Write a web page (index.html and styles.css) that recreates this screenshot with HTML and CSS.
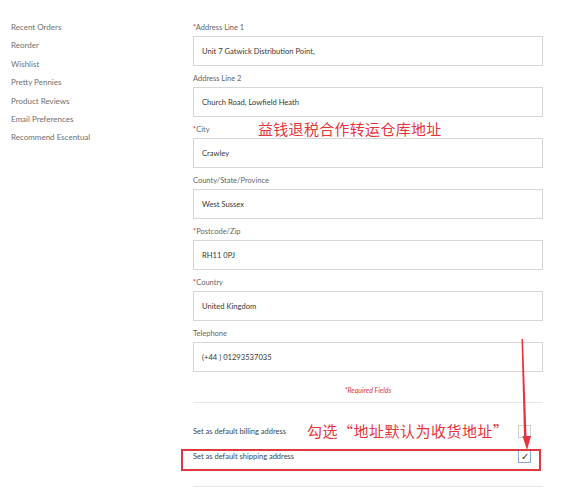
FILE: index.html
```html
<!DOCTYPE html>
<html>
<head>
    <title>Address Book - Edit Address</title>
    <link rel="stylesheet" href="styles.css">
</head>
<body>

<div class="page">
    <nav class="side-nav">
        <ul>
            <li><a href="#">Recent Orders</a></li>
            <li><a href="#">Reorder</a></li>
            <li><a href="#">Wishlist</a></li>
            <li><a href="#">Pretty Pennies</a></li>
            <li><a href="#">Product Reviews</a></li>
            <li><a href="#">Email Preferences</a></li>
            <li><a href="#">Recommend Escentual</a></li>
        </ul>
    </nav>

    <main class="address-form">
        <div class="field">
            <label><span class="req">*</span>Address Line 1</label>
            <div class="input">Unit 7 Gatwick Distribution Point,</div>
        </div>
        <div class="field">
            <label>Address Line 2</label>
            <div class="input">Church Road, Lowfield Heath</div>
        </div>
        <div class="field">
            <label><span class="req">*</span>City</label>
            <div class="input">Crawley</div>
        </div>
        <div class="field">
            <label>County/State/Province</label>
            <div class="input">West Sussex</div>
        </div>
        <div class="field">
            <label><span class="req">*</span>Postcode/Zip</label>
            <div class="input">RH11 0PJ</div>
        </div>
        <div class="field">
            <label><span class="req">*</span>Country</label>
            <div class="input">United Kingdom</div>
        </div>
        <div class="field">
            <label>Telephone</label>
            <div class="input">(+44 ) 01293537035</div>
        </div>

        <p class="required-note">*Required Fields</p>

        <div class="options">
            <div class="option">
                <span>Set as default billing address</span>
                <span class="check"></span>
            </div>
            <div class="option">
                <span>Set as default shipping address</span>
                <span class="check checked">&#10003;</span>
            </div>
        </div>
    </main>
</div>

<!-- annotations drawn over the screenshot -->
<div class="note note-warehouse">益钱退税合作转运仓库地址</div>
<div class="note note-tick">勾选“地址默认为收货地址”</div>
<div class="mark-box"></div>
<svg class="mark-arrow" width="20" height="116" viewBox="0 0 20 116">
    <polygon points="5.5,0 7,0 10.5,97 15,97 11,111 6.5,97 8,97" fill="#e8333b"/>
</svg>

</body>
</html>
```

FILE: styles.css
```css
body {
    margin: 0;
    padding: 0;
    background: #fff;
    font-family: 'Lato', 'Noto Sans', sans-serif;
    color: #333;
}

.page {
    display: flex;
    width: 579px;
}

.side-nav {
    width: 182px;
    padding-left: 11px;
    padding-top: 18px;
    box-sizing: border-box;
}
.side-nav ul {
    list-style: none;
    margin: 0;
    padding: 0;
}
.side-nav li {
    font-size: 8px;
    line-height: 18.4px;
}
.side-nav a {
    color: #707070;
    text-decoration: none;
}

.address-form {
    width: 350px;
    margin-left: 11px;
    padding-top: 23px;
}

.field {
    margin-bottom: 8px;
}
.field label {
    display: block;
    font-size: 7.5px;
    line-height: 10px;
    color: #666;
    margin-bottom: 3px;
}
.req {
    color: #e0393e;
}
.input {
    height: 30px;
    box-sizing: border-box;
    border: 1px solid #d6d6d6;
    padding: 0 8px;
    font-size: 7.6px;
    line-height: 28px;
    color: #383838;
}

.required-note {
    margin: 13px 0 0;
    font-size: 7px;
    line-height: 10px;
    font-style: italic;
    color: #e0393e;
    text-align: center;
    padding-bottom: 7px;
    border-bottom: 1px solid #e6e6e6;
}

.options {
    padding-top: 16px;
    padding-bottom: 17px;
    border-bottom: 1px solid #e6e6e6;
}
.option {
    display: flex;
    justify-content: space-between;
    align-items: center;
    height: 25px;
    padding-right: 12px;
    font-size: 7.5px;
    color: #444;
}
.check {
    width: 13px;
    height: 13px;
    box-sizing: border-box;
    border: 1px solid #cfcfcf;
    background: #fff;
    font-size: 10px;
    line-height: 11px;
    text-align: center;
    color: #333;
}
.check.checked {
    border-color: #86abd8;
}

/* red annotations */
.note {
    position: absolute;
    font-family: 'Noto Sans CJK SC', sans-serif;
    font-size: 15px;
    line-height: 18px;
    color: #e8333b;
    white-space: nowrap;
}
.note-warehouse {
    left: 258px;
    top: 120px;
    letter-spacing: 0.3px;
}
.note-tick {
    left: 307px;
    top: 422px;
    letter-spacing: 0.5px;
}
.mark-box {
    position: absolute;
    left: 181px;
    top: 449px;
    width: 356px;
    height: 18px;
    border: 2px solid #e0393e;
}
.mark-arrow {
    position: absolute;
    left: 516px;
    top: 339px;
}
```
